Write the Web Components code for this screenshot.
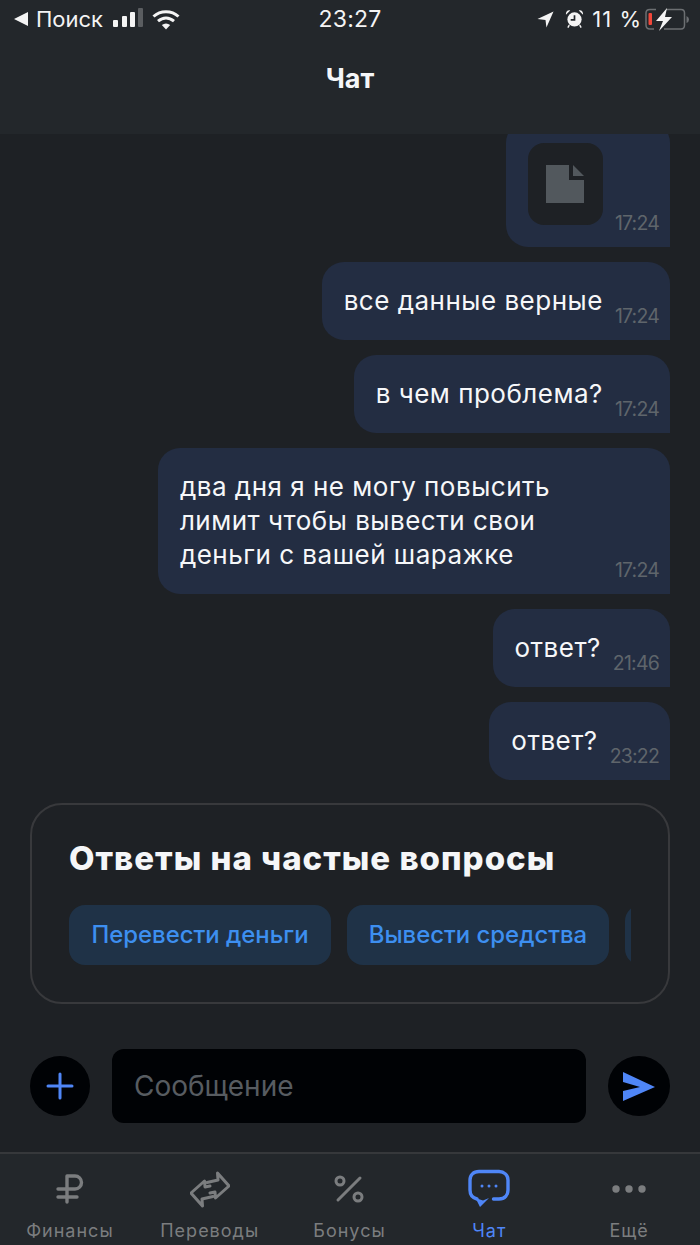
<!DOCTYPE html>
<html><head><meta charset="utf-8">
<style>
html,body{margin:0;padding:0;background:#1e2125}
body{width:700px;height:1245px;overflow:hidden;font-family:"Inter","Noto Sans",sans-serif;color:#fff}
</style></head><body>
<chat-app>
  <top-bar></top-bar>
  <message-list>
    <chat-bubble time="17:24" kind="file"></chat-bubble>
    <chat-bubble time="17:24">все данные верные</chat-bubble>
    <chat-bubble time="17:24">в чем проблема?</chat-bubble>
    <chat-bubble time="17:24" wide>два дня я не могу повысить<br>лимит чтобы вывести свои<br>деньги с вашей шаражке</chat-bubble>
    <chat-bubble time="21:46">ответ?</chat-bubble>
    <chat-bubble time="23:22">ответ?</chat-bubble>
  </message-list>
  <faq-card></faq-card>
  <message-composer></message-composer>
  <tab-bar></tab-bar>
</chat-app>
<script>
const UI='"Inter","Noto Sans",sans-serif';
const SYS='"Inter","Roboto",sans-serif';
class ChatApp extends HTMLElement{constructor(){super();this.attachShadow({mode:'open'}).innerHTML=`<style>:host{display:flex;flex-direction:column;height:1245px;width:700px}</style><slot></slot>`}}
class TopBar extends HTMLElement{constructor(){super();this.attachShadow({mode:'open'}).innerHTML=`<style>
:host{display:block;flex:none;height:134px;background:#23272b;box-sizing:border-box}
.status{display:grid;grid-template-columns:1fr auto 1fr;align-items:center;height:38px;padding:0 14px;font:22px ${SYS};color:#f4f4f4}
.l,.r{display:flex;align-items:center}
.r{justify-content:flex-end}
.title{font:700 27px/1 ${UI};text-align:center;margin-top:27px;color:#f5f6f8}
svg{display:block}
</style>
<div class="status">
 <div class="l">
  <svg width="14" height="14" viewBox="0 0 14 14" style="margin-right:8px"><path d="M0 7 14 0V14Z" fill="#f4f4f4"/></svg>
  <span>Поиск</span>
  <svg width="31" height="20" viewBox="0 0 31 20" style="margin:-2px 0 0 10px"><g fill="#f4f4f4"><rect x="0" y="12" width="5" height="7" rx="1"/><rect x="9" y="8" width="5" height="11" rx="1"/><rect x="17" y="4" width="5" height="15" rx="1"/></g><rect x="25" y="0" width="5" height="19" rx="1" fill="#5a5d60"/></svg>
  <svg width="28" height="21" viewBox="0 0 28 21" style="margin-left:8px"><path d="M1.500 7.500C8.500 1 19.500 1 26.500 7.500" fill="none" stroke="#f4f4f4" stroke-width="3"/><path d="M6 12.200C11 8 17 8 22 12.200" fill="none" stroke="#f4f4f4" stroke-width="3"/><path d="M9.800 16 14 20.500 18.200 16C15.500 14 12.500 14 9.800 16Z" fill="#f4f4f4"/></svg>
 </div>
 <div style="font-size:23px;letter-spacing:.2px">23:27</div>
 <div class="r">
  <svg width="17" height="17" viewBox="0 0 18 18"><path d="M17.500 .5 .5 8.500 9 9.500 10 17.500Z" fill="#f4f4f4"/></svg>
  <svg width="19" height="20" viewBox="0 0 20 21" style="margin-left:11px"><circle cx="10" cy="11" r="7.500" fill="#f4f4f4"/><path d="M10 6.500V11.500H6" fill="none" stroke="#23272b" stroke-width="1.800"/><path d="M1 6 5.500 1.500C3 .5 .5 3 1 6ZM19 6 14.500 1.500C17 .5 19.500 3 19 6Z" fill="#f4f4f4"/><path d="M4.500 17 3 19.500M15.500 17 17 19.500" stroke="#f4f4f4" stroke-width="1.500"/></svg>
  <span style="margin-left:8px;margin-right:3px;letter-spacing:1px">11 %</span>
  <svg width="45" height="23" viewBox="0 0 45 23" style="margin-right:-4px"><path d="M11 1.500H5Q1 1.500 1 5V17Q1 21 5 21H9M21 1.500H36Q39.500 1.500 39.500 5V17Q39.500 21 36 21H19" fill="none" stroke="#6c6f72" stroke-width="1.500"/><rect x="3.500" y="5" width="3.500" height="12" rx="1" fill="#f0473a"/><path d="M41.500 8V15Q44 14 44 11.500T41.500 8Z" fill="#6c6f72"/><path d="M22 0 11 13H18L14 23 27 9H20Z" fill="#f4f4f4"/></svg>
 </div>
</div>
<div class="title">Чат</div>`}}
class MessageList extends HTMLElement{constructor(){super();this.attachShadow({mode:'open'}).innerHTML=`<style>
:host{display:flex;flex:none;height:646px;flex-direction:column;justify-content:flex-end;align-items:flex-end;gap:15px;padding-right:30px;overflow:hidden;box-sizing:border-box}
</style><slot></slot>`}}
class ChatBubble extends HTMLElement{constructor(){super();
const file=this.getAttribute('kind')==='file',t=this.getAttribute('time'),w=this.hasAttribute('wide');
this.attachShadow({mode:'open'}).innerHTML=`<style>
:host{display:flex;flex:none;align-items:flex-end;background:#232d42;border-radius:22px 22px 0 22px;padding:22px 11px 0 22px;box-sizing:border-box;font:26px/34px ${UI};letter-spacing:.5px;color:#f6f7f9}
.text{padding-bottom:22px;${w?'width:423px;':''}}
time{font:19.500px/24px ${UI};letter-spacing:-.8px;color:#5f656b;margin-left:12px;padding-bottom:12px;flex:none}
.file{width:75px;height:82px;border-radius:16px;background:#1e2125;display:flex;align-items:center;justify-content:center;margin-bottom:22px}
svg{display:block}
</style>${file?`<div class="file"><svg width="38" height="38" viewBox="0 0 38 38"><path d="M0 0H23V15H38V38H0Z" fill="#52585d"/><path d="M27 0 38 11H27Z" fill="#52585d"/></svg></div>`:`<div class="text"><slot></slot></div>`}<time>${t}</time>`}}
class FaqCard extends HTMLElement{constructor(){super();this.attachShadow({mode:'open'}).innerHTML=`<style>
:host{display:block;flex:none;margin:23px 30px 0;height:201px;box-sizing:border-box;border:2px solid #38393c;border-radius:32px;padding:33px 37px 0}
h2{margin:0;font:800 33px/40px ${UI};letter-spacing:1px;color:#f5f6f8;white-space:nowrap}
.row{display:flex;gap:16px;margin-top:27px;overflow:hidden;width:562px}
a{flex:none;display:block;height:60px;width:262px;box-sizing:border-box;text-align:center;border-radius:16px;background:#1f3247;color:#3d8ff0;font:500 23.900px/60px ${UI}}
</style><h2>Ответы на частые вопросы</h2><div class="row"><a>Перевести деньги</a><a>Вывести средства</a><a style="width:60px"></a></div>`}}
class MessageComposer extends HTMLElement{constructor(){super();this.attachShadow({mode:'open'}).innerHTML=`<style>
:host{display:grid;flex:none;grid-template-columns:60px 474px 62px;align-items:center;height:74px;margin-top:45px;padding:0 30px;gap:22px}
.c{height:60px;border-radius:50%;background:#000205;display:flex;align-items:center;justify-content:center}
.i{height:74px;background:#000205;border-radius:12px;font:28px/74px ${UI};color:#575c61;padding-left:22px;box-sizing:border-box}
svg{display:block}
</style><div class="c"><svg width="28" height="28" viewBox="0 0 28 28"><path d="M14 2V26M2 14H26" stroke="#4f86f7" stroke-width="3" stroke-linecap="round"/></svg></div>
<div class="i">Сообщение</div>
<div class="c"><svg width="32" height="29" viewBox="0 0 32 29"><path d="M0 0 32 15 0 29V19L17 15 0 10Z" fill="#4f86f7"/></svg></div>`}}
class TabBar extends HTMLElement{constructor(){super();
const g='#7b7d7f',b='#4f86f7';
const items=[
['Финансы',`<svg width="30" height="32" viewBox="0 0 30 32"><path d="M12 29V3H20A6.500 6.500 0 0 1 20 16H3M3 24H22" fill="none" stroke="${g}" stroke-width="3.400" stroke-linecap="round" stroke-linejoin="round"/></svg>`],
['Переводы',`<svg width="40" height="37" viewBox="0 0 40 37"><g fill="none" stroke="${g}" stroke-width="3" stroke-linejoin="round" stroke-linecap="round"><path d="M17 11.500 28 9 27.500 2 39 15 25.500 27 25 21 20 22"/><path d="M23 25.500 12 28 12.500 35 1 22 14.500 10 15 16 20 15"/></g></svg>`],
['Бонусы',`<svg width="30" height="28" viewBox="0 0 30 28"><g fill="none" stroke="${g}" stroke-width="3"><circle cx="6" cy="6" r="4"/><circle cx="24" cy="22" r="4"/><path d="M26 3 4 25" stroke-linecap="round"/></g></svg>`],
['Чат',`<svg width="42" height="40" viewBox="0 0 42 40"><path d="M25.500 30H31C37 30 40 26 40 21V11C40 6 36 2.500 31 2.500H11C5.500 2.500 2 6 2 11V21C2 26 5 29 9 30" fill="none" stroke="${b}" stroke-width="3.400" stroke-linecap="round"/><path d="M7.500 29 12 38 21 29 15 31.500Z" fill="${b}"/><g fill="${b}"><circle cx="14" cy="17" r="1.500"/><circle cx="21" cy="17" r="1.500"/><circle cx="28" cy="17" r="1.500"/></g></svg>`,1],
['Ещё',`<svg width="36" height="10" viewBox="0 0 36 10"><g fill="${g}"><circle cx="5" cy="5" r="3.700"/><circle cx="18" cy="5" r="3.700"/><circle cx="31" cy="5" r="3.700"/></g></svg>`]];
this.attachShadow({mode:'open'}).innerHTML=`<style>
:host{display:grid;flex:none;grid-template-columns:repeat(5,1fr);height:93px;margin-top:29px;box-sizing:border-box;border-top:2px solid #36383b;background:#23272b;padding:0 1px 0 0}
div{display:flex;flex-direction:column;align-items:center}
.ic{height:40px;justify-content:center;margin-top:15px}
span{font:18px/22px ${SYS};color:${g};margin-top:11px;letter-spacing:1px}
.on span{color:${b}}
svg{display:block}
</style>`+items.map(i=>`<div class="${i[2]?'on':''}"><div class="ic">${i[1]}</div><span>${i[0]}</span></div>`).join('')}}
customElements.define('chat-app',ChatApp);
customElements.define('top-bar',TopBar);
customElements.define('message-list',MessageList);
customElements.define('chat-bubble',ChatBubble);
customElements.define('faq-card',FaqCard);
customElements.define('message-composer',MessageComposer);
customElements.define('tab-bar',TabBar);
</script>
</body></html>
